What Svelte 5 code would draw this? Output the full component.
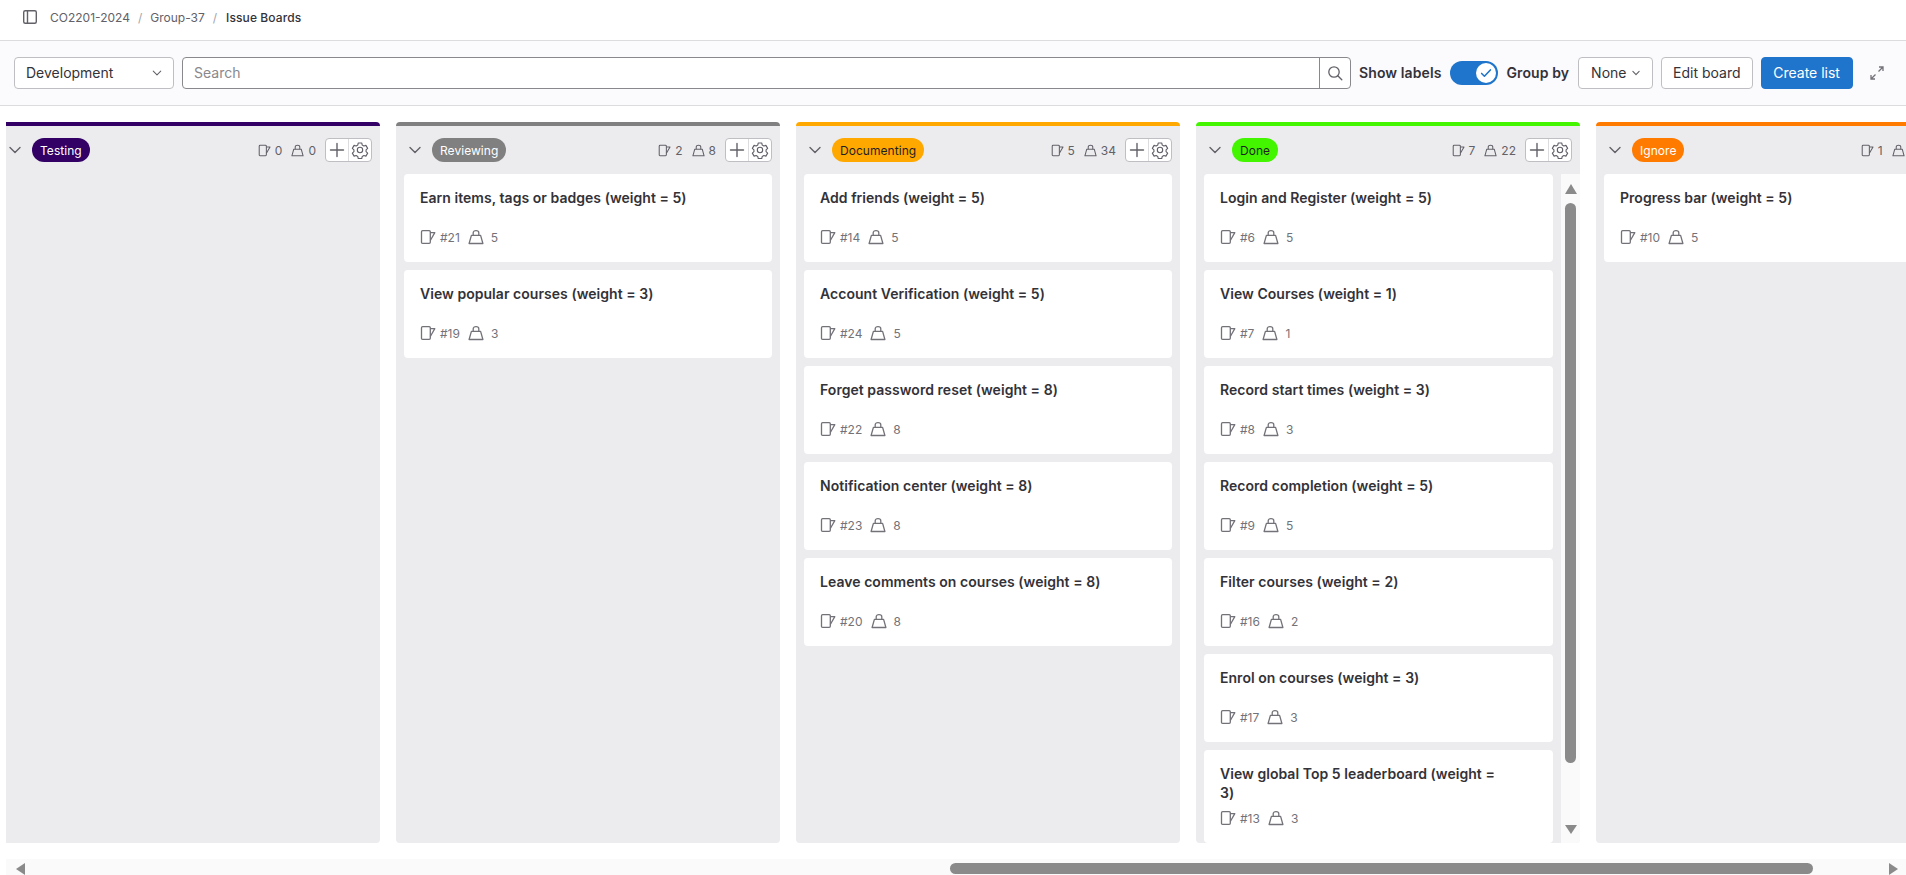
<script>
    const columns = [
        { name: 'Testing', color: '#330066', issues: 0, weight: 0, cards: [] },
        { name: 'Reviewing', color: '#808080', issues: 2, weight: 8, cards: [
            ['Earn items, tags or badges (weight = 5)', 21, 5],
            ['View popular courses (weight = 3)', 19, 3],
        ] },
        { name: 'Documenting', color: '#ffa900', dark: true, issues: 5, weight: 34, cards: [
            ['Add friends (weight = 5)', 14, 5],
            ['Account Verification (weight = 5)', 24, 5],
            ['Forget password reset (weight = 8)', 22, 8],
            ['Notification center (weight = 8)', 23, 8],
            ['Leave comments on courses (weight = 8)', 20, 8],
        ] },
        { name: 'Done', color: '#44f500', dark: true, issues: 7, weight: 22, scroll: true, cards: [
            ['Login and Register (weight = 5)', 6, 5],
            ['View Courses (weight = 1)', 7, 1],
            ['Record start times (weight = 3)', 8, 3],
            ['Record completion (weight = 5)', 9, 5],
            ['Filter courses (weight = 2)', 16, 2],
            ['Enrol on courses (weight = 3)', 17, 3],
            ['View global Top 5 leaderboard (weight = 3)', 13, 3],
        ] },
        { name: 'Ignore', color: '#ff7b00', issues: 1, weight: 5, cards: [
            ['Progress bar (weight = 5)', 10, 5],
        ] },
    ];
</script>

{#snippet mug(size)}
    <svg class="ico" width={size} height={size} viewBox="0 0 16 16" fill="none" stroke="currentColor" stroke-width="1.3">
        <path d="M2.600 1.600h6.600c.7 0 1.100.4 1.100 1.100v10.600c0 .7-.4 1.100-1.100 1.100H2.600c-.7 0-1.100-.4-1.100-1.100V2.700c0-.7.4-1.100 1.100-1.100z" />
        <path d="M10.300 3.600h4.500l-4.500 7.900" stroke-linejoin="round" />
    </svg>
{/snippet}

{#snippet bell(size)}
    <svg class="ico" width={size} height={size} viewBox="0 0 16 16" fill="none" stroke="currentColor" stroke-width="1.3">
        <path d="M3.400 6.400h9.200l2.300 8.100H1.100z" stroke-linejoin="round" />
        <path d="M5.200 6.400V3.700c0-1.300 1.100-2.100 2.800-2.100s2.800.8 2.800 2.100v2.700" />
    </svg>
{/snippet}

{#snippet chevron(size)}
    <svg class="ico" width={size} height={size} viewBox="0 0 16 16" fill="none" stroke="currentColor" stroke-width="1.4">
        <path d="M3 5.500l5 5 5-5" stroke-linecap="round" stroke-linejoin="round" />
    </svg>
{/snippet}

<div class="page">
    <header class="crumbs">
        <svg class="panel" width="16" height="16" viewBox="0 0 16 16" fill="none" stroke="#626168" stroke-width="1.4">
            <rect x="1.700" y="1.700" width="12.600" height="12.600" rx="1.500" />
            <path d="M5.500 1.700v12.600" />
        </svg>
        <span>CO2201-2024</span>
        <i>/</i>
        <span>Group-37</span>
        <i>/</i>
        <span class="current">Issue Boards</span>
    </header>

    <div class="filters">
        <div class="select board-select">
            <span>Development</span>
            {@render chevron(12)}
        </div>
        <div class="search">
            <span class="placeholder">Search</span>
            <div class="search-btn">
                <svg width="16" height="16" viewBox="0 0 16 16" fill="none" stroke="#626168" stroke-width="1.3">
                    <circle cx="7" cy="7" r="5.200" />
                    <path d="M10.800 10.800l4 4" stroke-linecap="round" />
                </svg>
            </div>
        </div>
        <b class="field">Show labels</b>
        <div class="toggle">
            <div class="knob">
                <svg width="14" height="14" viewBox="0 0 16 16" fill="none" stroke="#1f75cb" stroke-width="1.8">
                    <path d="M3 8.500l3.200 3.200L13 4.500" stroke-linecap="round" stroke-linejoin="round" />
                </svg>
            </div>
        </div>
        <b class="field">Group by</b>
        <div class="select group-select">
            <span>None</span>
            <svg class="ico" width="10" height="10" viewBox="0 0 16 16" fill="none" stroke="currentColor" stroke-width="1.800">
                <path d="M3 5.500l5 5 5-5" stroke-linecap="round" stroke-linejoin="round" />
            </svg>
        </div>
        <button class="btn">Edit board</button>
        <button class="btn primary">Create list</button>
        <svg class="expand" width="16" height="16" viewBox="0 0 16 16" fill="none" stroke="#737278" stroke-width="1.3">
            <path d="M9.500 6.500L14 2M10 2h4v4M6.500 9.500L2 14M2 10v4h4" />
        </svg>
    </div>

    <main class="board">
        <div class="lists">
            {#each columns as col}
                <section class="col" style="border-top-color: {col.color}">
                    <div class="col-head">
                        <span class="toggle-col">{@render chevron(16)}</span>
                        <span class="pill" style="background: {col.color}" class:dark={col.dark}>{col.name}</span>
                        <div class="counts">
                            {@render mug(13)}<span>{col.issues}</span>
                            {@render bell(13)}<span>{col.weight}</span>
                        </div>
                        <div class="col-btns">
                            <span>
                                <svg width="16" height="16" viewBox="0 0 16 16" fill="none" stroke="#626168" stroke-width="1.4">
                                    <path d="M8 1.500v13M1.500 8h13" stroke-linecap="round" />
                                </svg>
                            </span>
                            <span>
                                <svg width="18" height="18" viewBox="0 0 24 24" fill="none" stroke="#626168" stroke-width="1.5">
                                    <path d="M9.700 2.600h4.600l.7 2.800 2.100 1.200 2.800-.8 2.300 4-2.100 2v2.400l2.100 2-2.300 4-2.800-.8-2.100 1.200-.7 2.800H9.700l-.7-2.800-2.100-1.200-2.800.8-2.300-4 2.100-2v-2.400l-2.100-2 2.300-4 2.800.8L9 5.400z" stroke-linejoin="round" />
                                    <circle cx="12" cy="12" r="3.600" />
                                </svg>
                            </span>
                        </div>
                    </div>
                    <div class="col-body">
                        <div class="cards">
                            {#each col.cards as [title, id, weight]}
                                <article class="card">
                                    <div class="title">{title}</div>
                                    <div class="meta">
                                        {@render mug(16)}<span class="num">#{id}</span>
                                        {@render bell(16)}<span class="w">{weight}</span>
                                    </div>
                                </article>
                            {/each}
                        </div>
                        {#if col.scroll}
                            <div class="vtrack">
                                <div class="arrow-up"></div>
                                <div class="vthumb"></div>
                                <div class="arrow-down"></div>
                            </div>
                        {/if}
                    </div>
                </section>
            {/each}
        </div>
    </main>

    <div class="htrack">
        <div class="arrow-left"></div>
        <div class="hthumb"></div>
        <div class="arrow-right"></div>
    </div>
</div>

<style>
    :global(body) {
        margin: 0;
        background: #fff;
    }

    .page {
        width: 1906px;
        height: 875px;
        display: flex;
        flex-direction: column;
        overflow: hidden;
        font-family: Inter, "Noto Sans", sans-serif;
        font-size: 14px;
        color: #333238;
    }

    .ico {
        display: block;
        flex: none;
    }

    .crumbs {
        height: 41px;
        flex: none;
        box-sizing: border-box;
        padding: 0 0 6px 22px;
        display: flex;
        align-items: center;
        font-size: 12px;
        color: #626168;
        border-bottom: 1px solid #dcdcde;
    }

    .panel {
        margin-right: 12px;
    }

    .crumbs i {
        font-style: normal;
        color: #a4a3a8;
        margin: 0 8px;
    }

    .current {
        color: #333238;
        font-weight: 500;
        letter-spacing: .1px;
        margin-left: 1px;
    }

    .filters {
        height: 65px;
        flex: none;
        box-sizing: border-box;
        display: flex;
        align-items: center;
        padding: 0 0 1px 14px;
        background: #fbfafd;
        border-bottom: 1px solid #dcdcde;
    }

    .select {
        height: 32px;
        box-sizing: border-box;
        display: flex;
        align-items: center;
        justify-content: space-between;
        background: #fff;
        border: 1px solid #bfbfc3;
        border-radius: 4px;
        color: #333238;
    }

    .select .ico {
        color: #626168;
    }

    .board-select {
        width: 160px;
        padding: 0 10px 0 11px;
        margin-right: 8px;
    }

    .search {
        width: 1169px;
        height: 32px;
        box-sizing: border-box;
        display: flex;
        align-items: center;
        justify-content: space-between;
        background: #fff;
        border: 1px solid #89888d;
        border-radius: 4px;
    }

    .placeholder {
        color: #89888d;
        padding-left: 11px;
    }

    .search-btn {
        width: 30px;
        height: 30px;
        display: flex;
        align-items: center;
        justify-content: center;
        border-left: 1px solid #89888d;
    }

    .field {
        font-weight: 600;
        letter-spacing: .1px;
        color: #333238;
    }

    .filters .field:nth-of-type(1) {
        margin-left: 8px;
    }

    .toggle {
        width: 48px;
        height: 24px;
        margin: 0 8px 0 9px;
        box-sizing: border-box;
        padding: 2px;
        display: flex;
        justify-content: flex-end;
        background: #1f75cb;
        border-radius: 12px;
    }

    .knob {
        width: 20px;
        height: 20px;
        display: flex;
        align-items: center;
        justify-content: center;
        background: #fff;
        border-radius: 50%;
    }

    .group-select {
        width: 75px;
        padding: 0 11px 0 12px;
        margin: 0 8px 0 9px;
    }

    .btn {
        height: 32px;
        box-sizing: border-box;
        font: inherit;
        color: #333238;
        background: #fff;
        border: 1px solid #bfbfc3;
        border-radius: 4px;
        padding: 0 11px;
        margin-right: 8px;
    }

    .primary {
        width: 92px;
        color: #fff;
        background: #1f75cb;
        border-color: #1f75cb;
    }

    .expand {
        margin-left: 8px;
    }

    .board {
        height: 737px;
        flex: none;
        margin-left: 6px;
        padding-top: 16px;
        box-sizing: border-box;
        overflow: hidden;
    }

    .lists {
        height: 100%;
        margin-left: -10px;
        display: flex;
        gap: 16px;
    }

    .col {
        width: 384px;
        flex: none;
        box-sizing: border-box;
        display: flex;
        flex-direction: column;
        background: #ececef;
        border-top: 4px solid;
        border-radius: 4px;
        overflow: hidden;
    }

    .col-head {
        height: 48px;
        flex: none;
        box-sizing: border-box;
        display: flex;
        align-items: center;
        padding: 0 8px;
    }

    .toggle-col {
        color: #626168;
        margin-left: 3px;
        margin-right: 9px;
    }

    .pill {
        height: 24px;
        padding: 0 8px;
        display: flex;
        align-items: center;
        border-radius: 12px;
        font-size: 12px;
        letter-spacing: .05px;
        color: #fff;
    }

    .pill.dark {
        color: #1f1e24;
    }

    .counts {
        margin-left: auto;
        display: flex;
        align-items: center;
        font-size: 12px;
        color: #626168;
    }

    .counts span {
        margin: 0 9px 0 4px;
    }

    .col-btns {
        display: flex;
        height: 24px;
        box-sizing: border-box;
        background: #fff;
        border: 1px solid #bfbfc3;
        border-radius: 4px;
    }

    .col-btns span {
        width: 22px;
        display: flex;
        align-items: center;
        justify-content: center;
    }

    .col-btns span + span {
        border-left: 1px solid #dcdcde;
    }

    .col-body {
        flex: 1;
        min-height: 0;
        display: flex;
        gap: 8px;
        padding: 0 8px;
    }

    .col-body:has(.vtrack) {
        padding-right: 0;
    }

    .cards {
        flex: 1;
        min-width: 0;
        display: flex;
        flex-direction: column;
        gap: 8px;
        overflow: hidden;
    }

    .card {
        flex: none;
        min-height: 88px;
        box-sizing: border-box;
        padding: 14px 48px 15px 16px;
        background: #fff;
        border-radius: 4px;
    }

    .title {
        min-height: 33px;
        line-height: 19px;
        font-weight: 600;
        letter-spacing: .04px;
        margin-bottom: 6px;
    }

    .meta {
        display: flex;
        align-items: center;
        height: 20px;
        font-size: 12px;
        color: #737278;
    }

    .num {
        margin: 0 8px 0 4px;
    }

    .w {
        margin-left: 7px;
    }

    .vtrack {
        width: 19px;
        flex: none;
        display: flex;
        flex-direction: column;
        align-items: center;
        background: #fafafa;
    }

    .arrow-up,
    .arrow-down {
        width: 0;
        height: 0;
        border-left: 6.5px solid transparent;
        border-right: 6.5px solid transparent;
    }

    .arrow-up {
        margin-top: 10px;
        border-bottom: 10px solid #8a8a8a;
    }

    .vthumb {
        width: 11px;
        height: 560px;
        margin-top: 9px;
        background: #8a8a8a;
        border-radius: 6px;
    }

    .arrow-down {
        margin-top: 62px;
        border-top: 9px solid #8a8a8a;
    }

    .htrack {
        height: 16px;
        flex: none;
        margin: 16px 0 0 6px;
        box-sizing: border-box;
        padding: 4px 8px 0 10px;
        display: flex;
        background: #fafafa;
    }

    .arrow-left,
    .arrow-right {
        width: 0;
        height: 0;
        border-top: 6.5px solid transparent;
        border-bottom: 6.5px solid transparent;
    }

    .arrow-left {
        border-right: 9px solid #8a8a8a;
    }

    .hthumb {
        width: 863px;
        height: 11px;
        margin-left: auto;
        background: #8a8a8a;
        border-radius: 6px;
    }

    .arrow-right {
        margin-left: 76px;
        border-left: 9px solid #8a8a8a;
    }
</style>
